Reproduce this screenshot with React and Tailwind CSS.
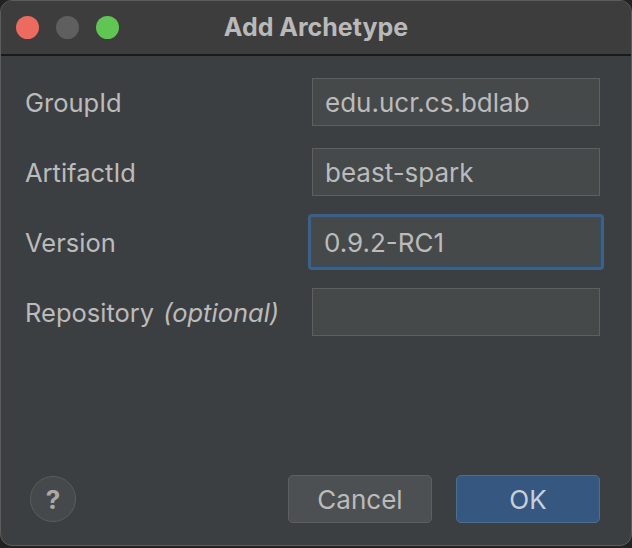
import React from "react";

const fields = [
  { label: "GroupId", value: "edu.ucr.cs.bdlab" },
  { label: "ArtifactId", value: "beast-spark" },
  { label: "Version", value: "0.9.2-RC1", focused: true },
  { label: "Repository", hint: "(optional)", value: "" },
];

export default function App() {
  return (
    <div
      className="w-[632px] h-[548px] bg-[#222222] overflow-hidden"
      style={{ fontFamily: "Inter, 'Liberation Sans', sans-serif" }}
    >
      <div className="h-[546px] flex flex-col rounded-[12px] border border-[#5c5c5c] overflow-hidden bg-[#3c3f41]">
        {/* title bar */}
        <div className="relative h-[55px] shrink-0 bg-[#3d3d3d] border-b-2 border-[#1a1a1a] flex items-center px-[15px] gap-[17px]">
          <span className="w-[23px] h-[23px] rounded-full bg-[#ed6a5e]" />
          <span className="w-[23px] h-[23px] rounded-full bg-[#5f5f5f]" />
          <span className="w-[23px] h-[23px] rounded-full bg-[#61c554]" />
          <div className="absolute inset-0 flex items-center justify-center pointer-events-none">
            <span className="text-[25px] font-bold text-[#b9b9b9]">
              Add Archetype
            </span>
          </div>
        </div>

        {/* form */}
        <div className="flex-1 flex flex-col pl-[24px] pr-[31px] pt-[22px]">
          <div className="flex flex-col gap-[23px]">
            {fields.map((f) => (
              <div key={f.label} className="flex items-center justify-between h-[47px]">
                <span className="pt-[3px] text-[25.5px] text-[#bbbbbb]">
                  {f.label}
                  {f.hint && <em className="ml-[9px] italic">{f.hint}</em>}
                </span>
                {f.focused ? (
                  <div className="w-[296px] h-[56px] -mr-[4px] rounded-[4px] bg-[#3d6185] p-[3px]">
                    <div className="w-full h-full bg-[#45494a] border border-[#2f4f70] flex items-center px-[12px] pt-[2px] text-[26px] text-[#bbbbbb]">
                      {f.value}
                    </div>
                  </div>
                ) : (
                  <div className="w-[288px] h-[48px] bg-[#45494a] border border-[#5e6060] flex items-center px-[12px] pt-[2px] text-[26px] text-[#bbbbbb]">
                    {f.value}
                  </div>
                )}
              </div>
            ))}
          </div>

          {/* footer */}
          <div className="mt-auto mb-[22px] flex items-center">
            <div className="ml-[5px] w-[46px] h-[46px] rounded-full bg-[#46494b] border border-[#5a5d5f] flex items-center justify-center text-[26px] font-bold text-[#a9a9a9]">
              ?
            </div>
            <div className="ml-auto flex gap-[24px]">
              <button className="w-[144px] h-[48px] rounded-[5px] bg-[#4c5052] border border-[#5e6060] text-[26px] text-[#bbbbbb]">
                Cancel
              </button>
              <button className="w-[144px] h-[48px] rounded-[5px] bg-[#365880] border border-[#4c708c] text-[26px] text-[#c5d0dc]">
                OK
              </button>
            </div>
          </div>
        </div>
      </div>
    </div>
  );
}
